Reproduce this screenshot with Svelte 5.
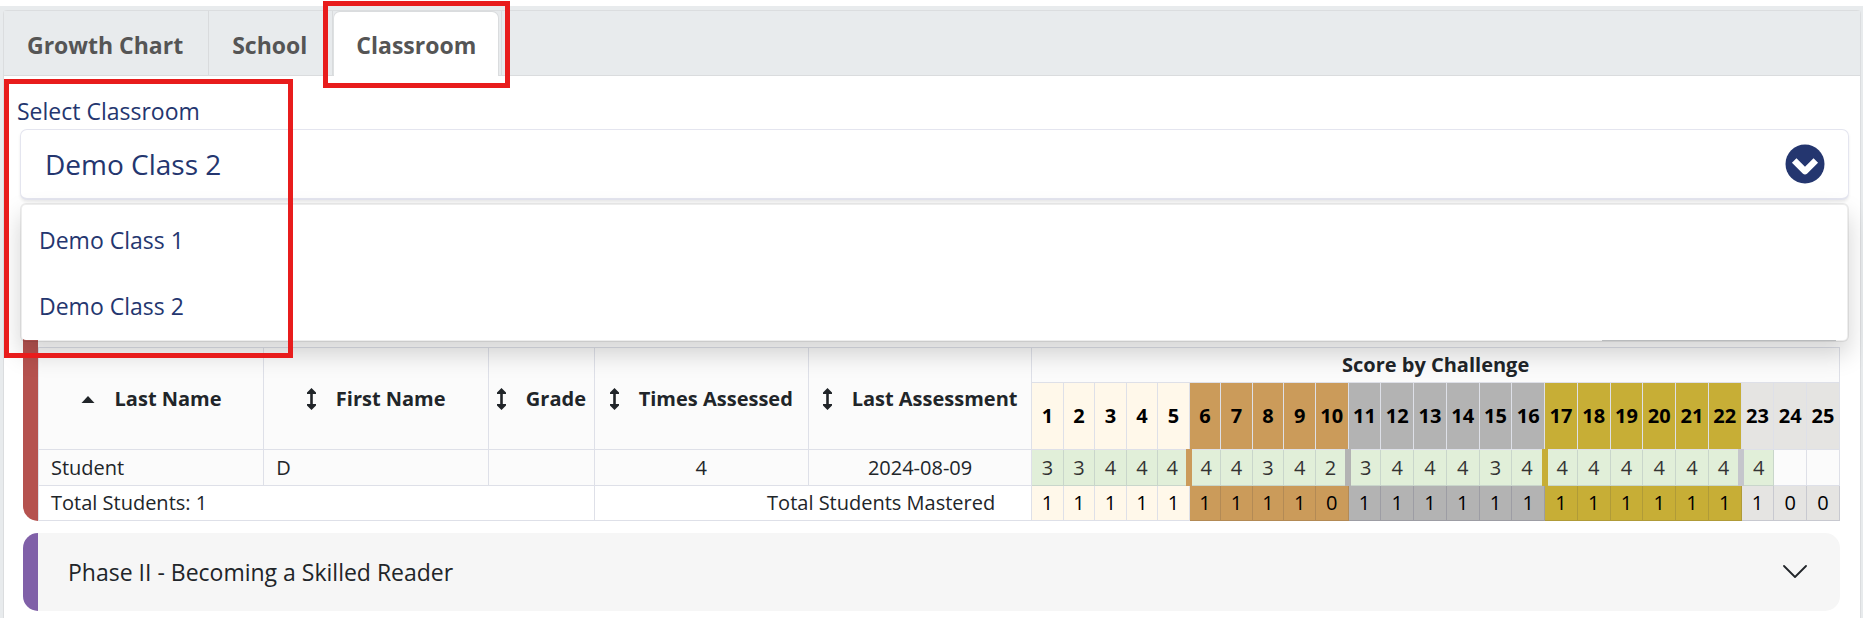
<script lang="ts">
  interface Challenge {
    id: number;
    tier: string;
    score: number | null;
    mastered: number;
  }

  const tabs = ['Growth Chart', 'School', 'Classroom'];
  const classes = ['Demo Class 1', 'Demo Class 2'];
  const sortable = ['First Name', 'Grade', 'Times Assessed', 'Last Assessment'];

  const scores = [3, 3, 4, 4, 4, 4, 4, 3, 4, 2, 3, 4, 4, 4, 3, 4, 4, 4, 4, 4, 4, 4, 4, null, null];
  const mastered = [1, 1, 1, 1, 1, 1, 1, 1, 1, 0, 1, 1, 1, 1, 1, 1, 1, 1, 1, 1, 1, 1, 1, 0, 0];
  const tierStarts = [6, 11, 17, 23];

  function tierOf(id: number) {
    if (id < 6) return 'cream';
    if (id < 11) return 'bronze';
    if (id < 17) return 'silver';
    if (id < 23) return 'gold';
    return 'platinum';
  }

  const challenges: Challenge[] = scores.map((score, i) => ({
    id: i + 1,
    tier: tierOf(i + 1),
    score,
    mastered: mastered[i],
  }));

  let activeTab = $state('Classroom');
  let selected = $state('Demo Class 2');
  let open = $state(true);

  function choose(name: string) {
    selected = name;
    open = false;
  }
</script>

<div class="page">
  <main class="card">
    <div class="tabs" role="tablist">
      {#each tabs as tab}
        <div class="tab-slot">
          <button
            class="tab"
            class:active={activeTab === tab}
            role="tab"
            aria-selected={activeTab === tab}
            onclick={() => (activeTab = tab)}
          >
            {tab}
          </button>
          {#if tab === 'Classroom'}
            <span class="highlight highlight-tab"></span>
          {/if}
        </div>
      {/each}
    </div>

    <section class="field">
      <span class="field-label" id="class-label">Select Classroom</span>
      <div class="dropdown">
        <button
          class="dropdown-toggle"
          aria-labelledby="class-label class-value"
          aria-haspopup="listbox"
          aria-expanded={open}
          onclick={() => (open = !open)}
        >
          <span id="class-value">{selected}</span>
          <svg class="toggle-icon" viewBox="0 0 40 40" aria-hidden="true">
            <circle cx="20" cy="20" r="19.5" fill="#24366f" />
            <path d="M9.2 16.4 20 27.2 30.8 16.4" fill="none" stroke="#fff" stroke-width="6.4" stroke-linejoin="round" />
          </svg>
        </button>
        {#if open}
          <div class="menu" role="listbox" aria-labelledby="class-label">
            {#each classes as name}
              <button class="option" role="option" aria-selected={selected === name} onclick={() => choose(name)}>
                {name}
              </button>
            {/each}
          </div>
        {/if}
      </div>
      <span class="highlight highlight-field"></span>
    </section>

    <section class="phase phase-one">
      <div class="phase-tools"></div>
      <table>
        <colgroup>
          <col class="col-name" />
          <col class="col-name" />
          <col class="col-grade" />
          <col class="col-times" />
          <col class="col-date" />
          {#each challenges as c}
            <col class:col-digit={c.id < 10} />
          {/each}
        </colgroup>
        <thead>
          <tr class="group-row">
            <th rowspan="2" aria-sort="ascending">
              <button class="sort">
                <svg class="sort-asc" viewBox="0 0 14 20" aria-hidden="true">
                  <path d="M.5 14 7 7l6.500 7z" fill="#212529" />
                </svg>
                Last Name
              </button>
            </th>
            {#each sortable as label}
              <th rowspan="2">
                <button class="sort">
                  <svg class="sort-both" viewBox="0 0 9 22" aria-hidden="true">
                    <path d="M4.500 0 9 4.500V6H5.800v10H9v1.500L4.500 22 0 17.500V16h3.200V6H0V4.500z" fill="#212529" />
                  </svg>
                  {label}
                </button>
              </th>
            {/each}
            <th colspan="25">Score by Challenge</th>
          </tr>
          <tr class="number-row">
            {#each challenges as c}
              <th class="number {c.tier}">{c.id}</th>
            {/each}
          </tr>
        </thead>
        <tbody>
          <tr class="student-row">
            <td>Student</td>
            <td>D</td>
            <td></td>
            <td class="center">4</td>
            <td class="center">2024-08-09</td>
            {#each challenges as c}
              <td class="score {c.tier}-edge" class:scored={c.score !== null} class:edge={tierStarts.includes(c.id)}>
                {c.score ?? ''}
              </td>
            {/each}
          </tr>
        </tbody>
        <tfoot>
          <tr>
            <td colspan="3">Total Students: 1</td>
            <td colspan="2" class="total-label">Total Students Mastered</td>
            {#each challenges as c}
              <td class="total {c.tier}">{c.mastered}</td>
            {/each}
          </tr>
        </tfoot>
      </table>
    </section>

    <button class="phase phase-two" aria-expanded="false">
      <span>Phase II - Becoming a Skilled Reader</span>
      <svg class="chevron" viewBox="0 0 24 14" aria-hidden="true">
        <path d="M1 1l11 11L23 1" fill="none" stroke="#212529" stroke-width="1.800" stroke-linecap="round" stroke-linejoin="round" />
      </svg>
    </button>
  </main>
</div>

<style>
  :global(body) {
    background: #e8ebed;
    font-family: 'Open Sans', 'Noto Sans', sans-serif;
    color: #212529;
  }

  button {
    font: inherit;
    color: inherit;
    border: 0;
    background: none;
    cursor: pointer;
  }

  .page {
    border-top: 6px solid #fff;
    padding: 4px 2px 0 3px;
  }

  .card {
    background: #fff;
    border: 1px solid #dbdddf;
    border-bottom: 0;
    border-radius: 4px 4px 0 0;
    padding-bottom: 8px;
  }

  .tabs {
    display: flex;
    height: 64px;
    background: #e8ebed;
    border-bottom: 1px solid #dadcde;
  }

  .tab-slot {
    position: relative;
    border-right: 1px solid #d9dbdd;
    padding: 1px 3px 0 1px;
  }

  .tab {
    height: 64px;
    padding: 2px 22px 0;
    font-size: 23px;
    font-weight: 700;
    color: #555;
    border-radius: 6px 6px 0 0;
  }

  .tab.active {
    background: #fff;
    box-shadow: 0 0 0 1px #dadcde;
    clip-path: inset(-1px -1px 0 -1px);
  }

  .highlight {
    position: absolute;
    z-index: 3;
    border: 5px solid #e81c1c;
    pointer-events: none;
  }

  .highlight-tab {
    inset: -10px -9px -13px -10px;
  }

  .highlight-field {
    top: 3px;
    left: 0;
    width: 279px;
    height: 269px;
  }

  .field {
    position: relative;
    padding: 17px 11px 0 13px;
    color: #24366f;
  }

  .field-label {
    display: block;
    font-size: 23px;
    line-height: 36px;
  }

  .dropdown {
    position: relative;
    margin-left: 3px;
  }

  .dropdown-toggle {
    display: flex;
    align-items: center;
    justify-content: space-between;
    width: 100%;
    height: 71px;
    padding: 0 23px 0 24px;
    font-size: 28px;
    background: #fff;
    border: 1px solid #e4e5ef;
    border-bottom-width: 2px;
    border-radius: 7px;
    box-shadow: 0 2px 3px rgba(0, 0, 0, 0.08);
  }

  .toggle-icon {
    width: 40px;
    height: 40px;
  }

  .menu {
    position: absolute;
    z-index: 2;
    top: 74px;
    left: 0;
    right: 0;
    padding: 2px 0 1px;
    background: #fff;
    background-clip: padding-box;
    border: 2px solid rgba(0, 0, 0, 0.07);
    border-radius: 6px;
    box-shadow: 0 12px 24px rgba(0, 0, 0, 0.17);
  }

  .option {
    display: block;
    width: 100%;
    height: 66px;
    padding: 0 17px;
    font-size: 23px;
    text-align: left;
  }

  .phase {
    margin: 0 20px 12px 19px;
  }

  .phase-one {
    margin-top: 130px;
    border-left: 15px solid #b5524f;
    border-radius: 0 0 0 15px;
  }

  .phase-tools {
    width: 234px;
    height: 10px;
    margin: 0 4px 6px auto;
    border-bottom: 1px solid #c8cacc;
  }

  table {
    width: 100%;
    table-layout: fixed;
    border-collapse: collapse;
    font-size: 20px;
    line-height: 24px;
  }

  .col-name {
    width: 12.5%;
  }

  .col-grade {
    width: 5.85%;
  }

  .col-times {
    width: 11.9%;
  }

  .col-date {
    width: 12.4%;
  }

  .col-digit {
    width: 1.75%;
  }

  th,
  td {
    height: 35px;
    padding: 0 12px;
    border: 1px solid #dee0e8;
    box-sizing: border-box;
  }

  th {
    background: #fbfbfb;
    white-space: nowrap;
  }

  .number-row th {
    height: 67px;
  }

  .number,
  .score,
  .total {
    padding: 0;
    text-align: center;
    color: #000;
  }

  .sort {
    display: flex;
    align-items: center;
    justify-content: center;
    gap: 20px;
    width: 100%;
    padding: 0;
    font-weight: 700;
  }

  th[rowspan] {
    padding: 0;
  }

  .sort-asc {
    width: 14px;
    height: 20px;
  }

  .sort-both {
    width: 9px;
    height: 22px;
  }

  .center {
    text-align: center;
  }

  .student-row td {
    height: 36px;
    background: #fbfbfb;
  }

  .student-row .score {
    color: #333;
  }

  .student-row .scored {
    background: #e1efd9;
    border-color: #c9d6cb;
  }

  .student-row .edge {
    border-left-width: 6px;
  }

  .student-row .edge.bronze-edge {
    border-left-color: #cb9b5a;
  }

  .student-row .edge.silver-edge {
    border-left-color: #b3b3b3;
  }

  .student-row .edge.gold-edge {
    border-left-color: #c7ae36;
  }

  .student-row .edge.platinum-edge {
    border-left-color: #c5c6cc;
  }

  .total-label {
    padding-right: 36px;
    text-align: right;
  }

  .cream {
    background: #fff8ea;
  }

  .bronze {
    background: #cb9b5a;
  }

  .silver {
    background: #b3b3b3;
  }

  .gold {
    background: #c7ae36;
  }

  .platinum {
    background: #e5e4e2;
  }

  .total.bronze {
    border-color: #b38a55;
  }

  .total.silver {
    border-color: #9d9da4;
  }

  .total.gold {
    border-color: #b09b38;
  }

  .total.platinum {
    border-color: #c8c9d0;
  }

  .phase-two {
    display: flex;
    align-items: center;
    justify-content: space-between;
    width: calc(100% - 39px);
    height: 78px;
    margin-bottom: 0;
    padding: 0 33px 0 30px;
    font-size: 23px;
    text-align: left;
    background: #f6f6f6;
    border-left: 15px solid #8060a8;
    border-radius: 15px;
  }

  .chevron {
    width: 24px;
    height: 14px;
  }
</style>
